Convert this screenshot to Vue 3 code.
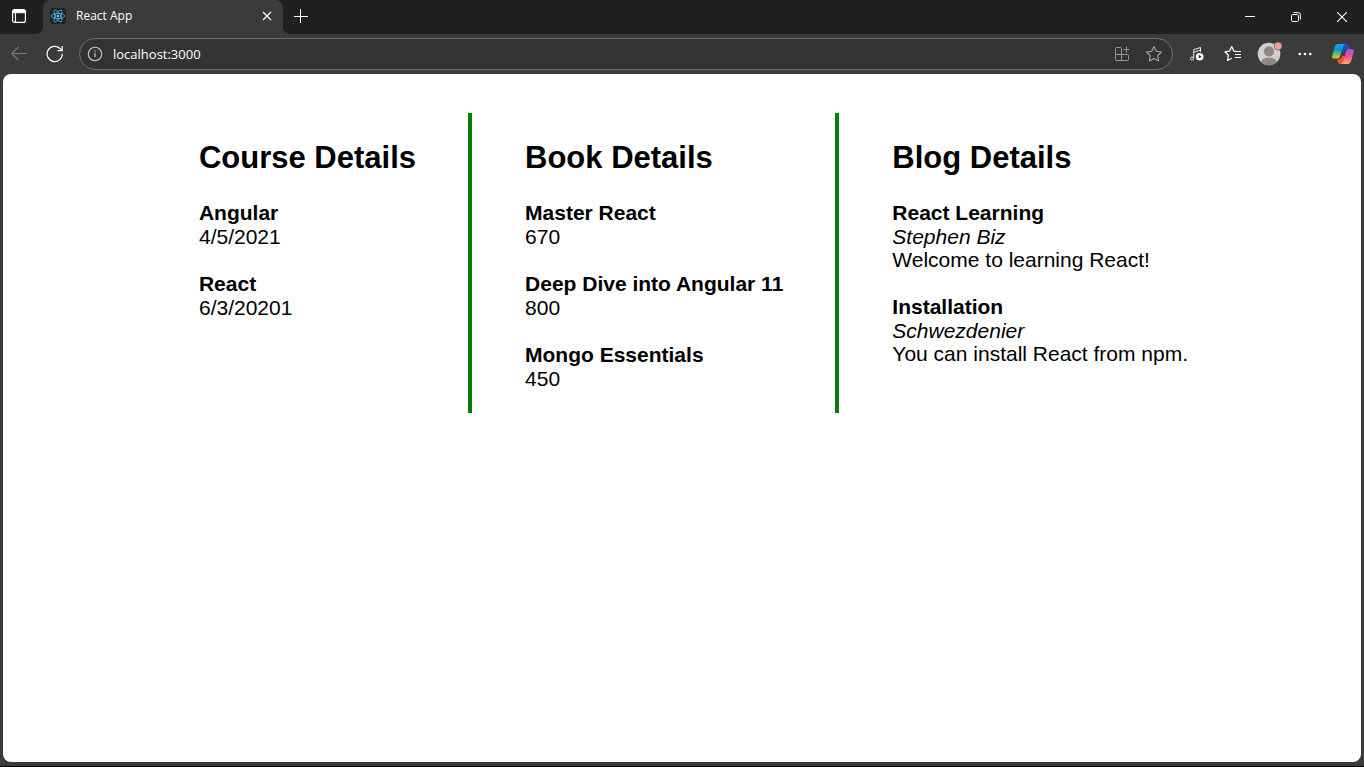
<script setup>
const courses = [
  { id: 1, name: 'Angular', lines: ['4/5/2021'] },
  { id: 2, name: 'React', lines: ['6/3/20201'] },
]
const books = [
  { id: 1, name: 'Master React', lines: ['670'] },
  { id: 2, name: 'Deep Dive into Angular 11', lines: ['800'] },
  { id: 3, name: 'Mongo Essentials', lines: ['450'] },
]
const blogs = [
  { id: 1, name: 'React Learning', author: 'Stephen Biz', lines: ['Welcome to learning React!'] },
  { id: 2, name: 'Installation', author: 'Schwezdenier', lines: ['You can install React from npm.'] },
]
const columns = [
  { title: 'Course Details', items: courses },
  { title: 'Book Details', items: books },
  { title: 'Blog Details', items: blogs },
]
</script>

<template>
  <div class="browser">
    <header class="titlebar">
      <button class="btn tab-actions" aria-label="Tab actions">
        <svg width="16" height="16" viewBox="0 0 16 16" fill="none" stroke="#fff">
          <rect x="1.6" y="1.6" width="12.8" height="12.8" rx="2.2" stroke-width="1.2" />
          <path d="M2 2.5h12v2.2H2z" fill="#fff" />
          <path d="M4.5 5v9" stroke-width="1.1" />
        </svg>
      </button>
      <div class="tab">
        <svg class="favicon" width="16" height="16" viewBox="0 0 16 16">
          <rect width="16" height="16" rx="2" fill="#222" />
          <g fill="none" stroke="#58bcd8" stroke-width="0.8">
            <ellipse cx="8" cy="8" rx="6.7" ry="2.6" />
            <ellipse cx="8" cy="8" rx="6.7" ry="2.6" transform="rotate(60 8 8)" />
            <ellipse cx="8" cy="8" rx="6.7" ry="2.6" transform="rotate(120 8 8)" />
          </g>
          <circle cx="8" cy="8" r="1.3" fill="#61dafb" />
        </svg>
        <span class="tab-title">React App</span>
        <button class="btn tab-close" aria-label="Close tab">
          <svg width="10" height="10" viewBox="0 0 10 10" stroke="#fff" stroke-width="1.2"><path d="M1 1l8 8M9 1l-8 8" /></svg>
        </button>
      </div>
      <button class="btn new-tab" aria-label="New tab">
        <svg width="14" height="14" viewBox="0 0 14 14" stroke="#fff"><path d="M6.5 0v14M0 7.5h14" /></svg>
      </button>
      <div class="window-controls">
        <button class="btn win" aria-label="Minimize">
          <svg width="10" height="10" viewBox="0 0 10 10" stroke="#fff"><path d="M0 4.5h10" /></svg>
        </button>
        <button class="btn win" aria-label="Restore">
          <svg width="10" height="10" viewBox="0 0 10 10" fill="none" stroke="#fff">
            <rect x=".5" y="2.5" width="7" height="7" rx="1.2" />
            <path d="M2.5 .6H7.3Q9.4 .6 9.4 2.7V7.5" />
          </svg>
        </button>
        <button class="btn win" aria-label="Close">
          <svg width="10" height="10" viewBox="0 0 10 10" stroke="#fff" stroke-width="1.1"><path d="M0 0l10 10M10 0L0 10" /></svg>
        </button>
      </div>
    </header>

    <nav class="toolbar">
      <button class="btn tool" aria-label="Back" disabled>
        <svg width="16" height="16" viewBox="0 0 16 16" fill="none" stroke="#7b7b7b" stroke-width="1.1"><path d="M16 7.5H.8M7.5 .8L.8 7.5l6.7 6.7" /></svg>
      </button>
      <button class="btn tool" aria-label="Refresh">
        <svg width="18" height="18" viewBox="0 0 18 18" fill="none" stroke="#fff" stroke-width="1.2"><path d="M16.3 8.8A7.6 7.6 0 1 1 13.8 3.3L16 5.5M16.2 1v4.7h-4.7" /></svg>
      </button>
      <div class="address">
        <svg width="16" height="16" viewBox="0 0 16 16" fill="none" stroke="#c8c8c8">
          <circle cx="8" cy="8" r="6.7" stroke-width="1.1" />
          <path d="M8 7v4.2M8 4.5v1.3" stroke-width="1.2" />
        </svg>
        <input class="url" type="text" value="localhost:3000" aria-label="Address" spellcheck="false" />
        <button class="btn inset" aria-label="Install app">
          <svg width="16" height="16" viewBox="0 0 16 16" fill="none" stroke="#969696">
            <path d="M7.5 8.5v-6a1 1 0 0 0-1-1h-4a1 1 0 0 0-1 1v11a1 1 0 0 0 1 1h11a1 1 0 0 0 1-1v-4a1 1 0 0 0-1-1H1.5M7.5 8.5v6M12.5 .5v6M9.5 3.5h6" />
          </svg>
        </button>
        <button class="btn inset" aria-label="Add to favorites">
          <svg width="18" height="18" viewBox="0 0 18 18" fill="none" stroke="#a6a6a6" stroke-width="1.1" stroke-linejoin="round"><path d="M9 1.5l2.3 4.8 5.2.7-3.8 3.7.9 5.3L9 13.5 4.4 16l.9-5.3L1.5 7l5.2-.7z" /></svg>
        </button>
      </div>
      <div class="tools">
        <button class="btn tool" aria-label="Media">
          <svg width="16" height="16" viewBox="0 0 16 16" fill="none" stroke="#e8e8e8">
            <circle cx="3" cy="12.5" r="1.5" />
            <path d="M4.7 12.3V3.7L11.5 1.5V6M4.7 6.3l6.8-2.2M8 8v1.5" />
            <circle cx="10.7" cy="10.7" r="3.8" fill="#fff" stroke="none" />
            <path d="M9.7 8.8v3.8l3-1.9z" fill="#333" stroke="none" />
          </svg>
        </button>
        <button class="btn tool" aria-label="Favorites">
          <svg width="18" height="18" viewBox="0 0 18 18" fill="none" stroke="#fff" stroke-width="1.2" stroke-linejoin="round"><path d="M11.6 6.4l-1.8-.3L7.7 1.5 5.5 6.1.9 6.8l3.5 3.4-.8 5.3 4.1-2.2M11 6.5h6M11 9.5h6M11 12.5h6" /></svg>
        </button>
        <button class="btn tool" aria-label="Profile">
          <svg width="26" height="26" viewBox="0 0 26 26">
            <defs><clipPath id="face"><circle cx="13" cy="13" r="11.3" /></clipPath></defs>
            <circle cx="13" cy="13" r="11.3" fill="#d2d0cd" />
            <g fill="#8c8884" clip-path="url(#face)"><circle cx="13" cy="10.3" r="5.1" /><ellipse cx="13" cy="21.5" rx="8" ry="5" /></g>
            <circle cx="22" cy="5" r="4" fill="#fa9c98" stroke="#3b3b3b" stroke-width=".5" />
          </svg>
        </button>
        <button class="btn tool" aria-label="Settings and more">
          <svg width="16" height="4" viewBox="0 0 16 4" fill="#fff"><circle cx="2.8" cy="2" r="1.3" /><circle cx="8" cy="2" r="1.3" /><circle cx="13.2" cy="2" r="1.3" /></svg>
        </button>
        <button class="btn copilot" aria-label="Copilot">
          <svg width="24" height="22" viewBox="0 0 24 22">
            <defs>
              <linearGradient id="cool" x1="0" y1="0" x2="0" y2="1"><stop offset="0" stop-color="#16aef4" /><stop offset=".35" stop-color="#168ddc" /><stop offset=".65" stop-color="#52b878" /><stop offset="1" stop-color="#f3c516" /></linearGradient>
              <linearGradient id="warm" x1="0" y1="0" x2="0" y2="1"><stop offset="0" stop-color="#9d55ed" /><stop offset=".5" stop-color="#ee5196" /><stop offset="1" stop-color="#ffad51" /></linearGradient>
            </defs>
            <path d="M11 1h4.3q2 0 2.5 2l.8 3h-2.4q-2.200 0-3 2.200L12.400 10 11 8z" fill="#1b50c8" />
            <path d="M7 1h7.500q-1.800.2-2.500 2.600L9 13.400Q8.300 15.600 6 15.600H3.200Q.4 15.600 1.200 12.800L3.600 4Q4.400 1 7 1z" fill="url(#cool)" />
            <path d="M6.200 16.600h1.500q2.300 0 3-2.300l.6-2 2.200 1.200-1.600 5Q11.200 21 9.300 21 7.400 21 6.800 19z" fill="#f4553a" />
            <path d="M17.800 6h2.700q3 0 2.200 3l-2.400 8.600Q19.400 21 16.500 21H9.400q1.900-.4 2.600-2.600l3-10Q15.700 6 17.800 6z" fill="url(#warm)" />
          </svg>
        </button>
      </div>
    </nav>

    <main class="page">
      <div class="columns">
        <section v-for="column in columns" :key="column.title" class="column">
          <h1>{{ column.title }}</h1>
          <article v-for="item in column.items" :key="item.id" class="item">
            <h2>{{ item.name }}</h2>
            <p v-if="item.author" class="author">{{ item.author }}</p>
            <p v-for="line in item.lines" :key="line">{{ line }}</p>
          </article>
        </section>
      </div>
    </main>
  </div>
</template>

<style>
html,
body,
#app {
  height: 100%;
}
body {
  margin: 0;
  background: #3b3b3b;
}
</style>

<style scoped>
* {
  box-sizing: border-box;
}
.browser {
  display: flex;
  flex-direction: column;
  min-height: 100%;
  border-bottom: 1px solid #000;
  background: #3b3b3b;
  color: #fff;
  font-family: "Open Sans", "Noto Sans", sans-serif;
}
.btn {
  display: flex;
  align-items: center;
  justify-content: center;
  padding: 0;
  border: 0;
  background: none;
}
svg {
  display: block;
  flex: none;
}
.titlebar {
  display: flex;
  height: 34px;
  background: #202020;
}
.tab-actions {
  width: 38px;
  height: 32px;
  margin-right: 5px;
}
.tab {
  position: relative;
  display: flex;
  align-items: center;
  width: 240px;
  padding: 0 8px 2px 7px;
  border-radius: 8px 8px 0 0;
  background: #3b3b3b;
}
.tab::before,
.tab::after {
  content: "";
  position: absolute;
  bottom: 0;
  width: 8px;
  height: 8px;
}
.tab::before {
  right: 100%;
  background: radial-gradient(circle at 0 0, #202020 8px, #3b3b3b 8px);
}
.tab::after {
  left: 100%;
  background: radial-gradient(circle at 100% 0, #202020 8px, #3b3b3b 8px);
}
.tab-title {
  flex: 1;
  margin-left: 10px;
  font-size: 12px;
  line-height: 16px;
}
.tab-close {
  width: 16px;
  height: 16px;
}
.new-tab {
  width: 36px;
  height: 32px;
}
.window-controls {
  display: flex;
  margin-left: auto;
}
.win {
  width: 46px;
  height: 34px;
}
.win:last-child {
  width: 45px;
}
.toolbar {
  display: flex;
  align-items: center;
  height: 40px;
  padding-left: 1px;
}
.tool {
  width: 36px;
  height: 32px;
}
.address {
  display: flex;
  flex: 1;
  align-items: center;
  height: 32px;
  margin-left: 6px;
  padding: 0 8px 0 7px;
  border: 1px solid #6f6f6f;
  border-radius: 16px;
  background: #333;
}
.url {
  flex: 1;
  min-width: 0;
  padding: 0 0 0 10px;
  border: 0;
  outline: 0;
  background: none;
  color: #fff;
  font-family: inherit;
  font-size: 13px;
  line-height: 20px;
}
.inset {
  width: 20px;
  height: 24px;
  margin-left: 12px;
}
.tools {
  display: flex;
  align-items: center;
  margin-left: 6px;
}
.copilot {
  width: 41px;
  height: 32px;
  padding-right: 2px;
}
.page {
  flex: 1;
  margin: 0 3px 4px;
  padding: 39px 0;
  border-radius: 8px;
  background: #fff;
  color: #000;
  font-family: "Liberation Sans", Arial, sans-serif;
}
.columns {
  display: flex;
  justify-content: center;
}
.column {
  min-height: 300px;
  padding: 27px 52px 23px 53px;
}
.column + .column {
  border-left: 4px solid green;
}
.column:last-child {
  padding-right: 30px;
}
h1 {
  margin: 0 0 25px;
  font-size: 31px;
  line-height: 36px;
}
.item + .item {
  margin-top: 24px;
}
h2 {
  margin: 0;
  font-size: 21px;
  line-height: 24px;
}
p {
  margin: 0;
  font-size: 21px;
  line-height: 23px;
}
.author {
  font-style: italic;
}
</style>
